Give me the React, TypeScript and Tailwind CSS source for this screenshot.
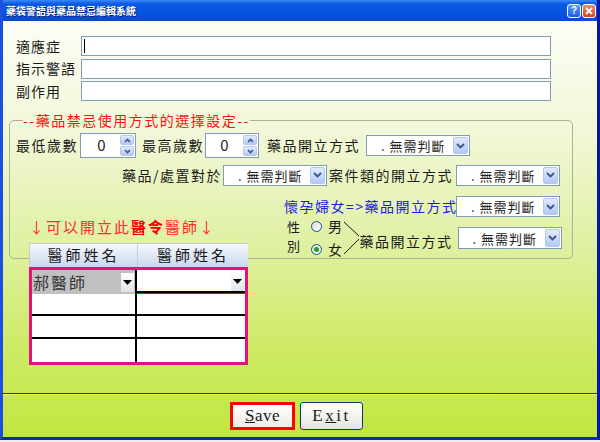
import React from 'react';

const Chevron = () => (
	<svg width="9" height="6" viewBox="0 0 9 6">
		<path d="M1 1l3.5 3.5L8 1" stroke="#3d5486" strokeWidth="1.8" fill="none" />
	</svg>
);

const Select = ({ className = 'h-[21px]' }: { className?: string }) => (
	<div
		className={
			'w-[104px] flex items-center justify-between bg-white border border-[#7f9db9] shrink-0 ' +
			className
		}
	>
		<span className="pl-[14px] text-[13px] tracking-[1px] text-[#222] leading-none whitespace-nowrap">
			. 無需判斷
		</span>
		<div className="w-[15px] self-stretch m-[1px] rounded-[2px] border border-[#b4c8f2] bg-[linear-gradient(180deg,#e0ebfe,#b2c9f5)] flex items-center justify-center">
			<Chevron />
		</div>
	</div>
);

const Spinner = ({ w }: { w: string }) => (
	<div className={'h-[25px] flex bg-white border border-[#7f9db9] shrink-0 ' + w}>
		<div className="flex-1 flex items-center justify-end pr-[12px] text-[15px] text-[#222]">0</div>
		<div className="w-[16px] flex flex-col gap-px p-px">
			<div className="flex-1 rounded-[2px] border border-[#b4c8f2] bg-[linear-gradient(180deg,#e0ebfe,#b2c9f5)] flex items-center justify-center">
				<svg width="7" height="5" viewBox="0 0 7 5">
					<path d="M1 4l2.5-2.5L6 4" stroke="#3d5486" strokeWidth="1.6" fill="none" />
				</svg>
			</div>
			<div className="flex-1 rounded-[2px] border border-[#b4c8f2] bg-[linear-gradient(180deg,#e0ebfe,#b2c9f5)] flex items-center justify-center">
				<svg width="7" height="5" viewBox="0 0 7 5">
					<path d="M1 1l2.5 2.5L6 1" stroke="#3d5486" strokeWidth="1.6" fill="none" />
				</svg>
			</div>
		</div>
	</div>
);

const Radio = ({ checked }: { checked?: boolean }) => (
	<div className="w-[11px] h-[11px] rounded-full border border-[#1c5180] bg-[linear-gradient(135deg,#dcdcd7,#ffffff)] flex items-center justify-center shrink-0">
		{checked && <div className="w-[5px] h-[5px] rounded-full bg-[#21a121]" />}
	</div>
);

const DropArrow = () => (
	<div className="w-[13px] h-[19px] bg-[linear-gradient(180deg,#ffffff,#dce4ea)] flex items-center justify-center">
		<svg width="9" height="5" viewBox="0 0 9 5">
			<path d="M0 0h9L4.5 5z" fill="#000" />
		</svg>
	</div>
);

const App = () => {
	return (
		<div className="w-[600px] h-[442px] bg-[#eef0ee] font-['Noto_Sans_CJK_TC',sans-serif]">
			<div className="h-[440px] flex flex-col border-l-[3px] border-r-[3px] border-b-[3px] border-l-[#1c4ee0] border-r-[#0019a6] border-b-[#0a2bc0]">
				{/* title bar */}
				<div className="h-[21px] flex items-center justify-between pl-[3px] pr-px bg-[linear-gradient(180deg,#3d8bf7_0%,#0b5ae5_18%,#0553e0_60%,#0a49cf_100%)]">
					<span className="text-[10px] font-bold text-white [text-shadow:1px_1px_0_#0a1e6e]">
						藥袋警語與藥品禁忌編輯系統
					</span>
					<div className="flex gap-px">
						<div className="w-[14px] h-[14px] rounded-[3px] border border-white bg-[linear-gradient(180deg,#5b97f8,#1d5ee6)] flex items-center justify-center text-white text-[10px] font-bold font-['Liberation_Sans',sans-serif] leading-none">
							?
						</div>
						<div className="w-[14px] h-[14px] rounded-[3px] border border-white bg-[linear-gradient(180deg,#ee8e6a,#d5411c)] flex items-center justify-center">
							<svg width="8" height="8" viewBox="0 0 8 8">
								<path d="M1 1l6 6M7 1L1 7" stroke="#fff" strokeWidth="1.8" />
							</svg>
						</div>
					</div>
				</div>

				{/* body */}
				<div className="flex-1 flex flex-col bg-[linear-gradient(180deg,#fcfdf6_0%,#f1f7d6_28%,#dff0a0_55%,#cdea62_80%,#c2e640_100%)] text-[14px] tracking-[1.5px] text-[#1a1a1a]">
					<div className="pl-[13px] mt-[15px] flex flex-col gap-[2.5px]">
						{['適應症', '指示警語', '副作用'].map((label, i) => (
							<div key={label} className="flex items-center h-[20px]">
								<span className="w-[65px] tracking-[1px] whitespace-nowrap">{label}</span>
								<div className="w-[470px] h-[20px] bg-white border border-[#7f9db9] flex items-center">
									{i === 0 && <div className="ml-[2px] w-px h-[14px] bg-black" />}
								</div>
							</div>
						))}
					</div>

					<fieldset className="ml-[6px] mt-[10px] w-[564px] border border-[#a8b496] rounded-[5px] px-[6px] pb-px">
						<legend className="ml-[7px] text-[#ff1010] leading-[18px]">--藥品禁忌使用方式的選擇設定--</legend>

						<div className="mt-[4px] flex items-center h-[25px] whitespace-nowrap">
							<span className="w-[64px]">最低歲數</span>
							<Spinner w="w-[56px]" />
							<span className="ml-[6px] w-[63px]">最高歲數</span>
							<Spinner w="w-[54px]" />
							<span className="ml-[8px] w-[99px]">藥品開立方式</span>
							<Select />
						</div>

						<div className="mt-[6px] flex items-center h-[22px] pl-[106px] whitespace-nowrap">
							<span className="w-[101px]">藥品/處置對於</span>
							<Select />
							<span className="ml-[2px] w-[127px]">案件類的開立方式</span>
							<Select />
						</div>

						<div className="mt-[10px] flex">
							<div className="w-[268px] h-[61px] pl-[13px] flex flex-col">
								<div className="mt-[22px] leading-[18px] text-[15px] tracking-[2px] text-[#ff2a2a] whitespace-nowrap">
									↓可以開立此<span className="font-bold text-[#f00000]">醫令</span>醫師↓
								</div>
								<div className="mt-[7px] w-[219px] shrink-0">
									<div className="grid grid-cols-[108px_1fr] h-[24px] border-t border-l border-[#c8ccd0] bg-[linear-gradient(180deg,#f6f9fd,#c8d8ee)]">
										<div className="flex items-center justify-center border-r border-[#c8ccd0] tracking-[3px] text-[15px]">醫師姓名</div>
										<div className="flex items-center justify-center tracking-[3px] text-[15px]">醫師姓名</div>
									</div>
									<div className="border-[3px] border-[#e3127a] bg-white">
										<div className="grid grid-cols-[105px_1fr] h-[23px] border-b-2 border-black">
											<div className="flex items-center justify-between bg-[#c0c0c0] border-r-2 border-black pl-[1px] pr-px">
												<span className="text-[16px] tracking-[2px] text-[#333]">郝醫師</span>
												<DropArrow />
											</div>
											<div className="flex items-center justify-end border-b border-[#ff0000] pr-px">
												<DropArrow />
											</div>
										</div>
										{[0, 1, 2].map((r) => (
											<div
												key={r}
												className={
													'grid grid-cols-[105px_1fr] h-[23px] ' +
													(r < 2 ? 'border-b-2 border-black' : '')
												}
											>
												<div className="border-r-2 border-black" />
												<div />
											</div>
										))}
									</div>
								</div>
							</div>

							<div className="flex flex-col whitespace-nowrap">
								<div className="flex items-center h-[21px]">
									<span className="w-[172px] text-[#2020e0]">懷孕婦女=&gt;藥品開立方式</span>
									<Select />
								</div>
								<div className="flex h-[40px]">
									<div className="ml-[3px] w-[16px] flex flex-col text-[13px] leading-[19px] tracking-normal">
										<span>性</span>
										<span>別</span>
									</div>
									<div className="ml-[8px] flex flex-col gap-[5px]">
										<div className="h-[18px] flex items-center gap-[6px]">
											<Radio />
											<span>男</span>
										</div>
										<div className="h-[18px] flex items-center gap-[6px]">
											<Radio checked />
											<span>女</span>
										</div>
									</div>
									<svg className="mt-[4px] shrink-0" width="16" height="36" viewBox="0 0 16 36">
										<path d="M0 1L15 15M0 33L15 18" stroke="#1a1a1a" strokeWidth="1" fill="none" />
									</svg>
									<span className="w-[98px] pt-[14px]">藥品開立方式</span>
									<Select className="h-[22px] mt-[10px]" />
								</div>
							</div>
						</div>
					</fieldset>

					<div className="flex-1" />

					<div className="border-t border-[#3c3c30]" />
					<div className="h-px bg-[#f4f65a]" />
					<div className="h-[42px] flex items-center pl-[227px] gap-[5px] font-['Liberation_Serif',serif] text-[17px] text-[#1a1a1a]">
						<div className="w-[65px] h-[28px] border-[3px] border-[#ff0000] bg-[linear-gradient(180deg,#ffffff,#ecebe4)] flex items-center justify-center tracking-[0.5px]">
							<span>
								<span className="underline">S</span>ave
							</span>
						</div>
						<div className="w-[63px] h-[28px] border border-[#003c74] rounded-[3px] bg-[linear-gradient(180deg,#ffffff,#e6e6dc)] flex items-center justify-center tracking-[2.5px]">
							<span>
								E<span className="underline">x</span>it
							</span>
						</div>
					</div>
				</div>
			</div>
		</div>
	);
};

export default App;
